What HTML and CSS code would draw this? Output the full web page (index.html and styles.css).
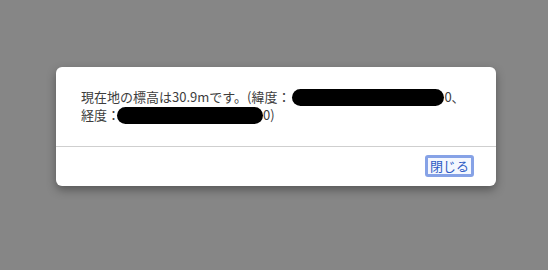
FILE: index.html
```html
<!DOCTYPE html>
<html lang="ja">
<head>
    <meta charset="UTF-8">
    <meta name="viewport" content="width=device-width, initial-scale=1.0">
    <title>標高</title>
    <link rel="stylesheet" href="styles.css">
</head>
<body>
    <div class="overlay">
        <div class="dialog">
            <div class="dialog-body">
                <p class="message">現在地の標高は30.9mです。(緯度：<span class="redact redact-lat"></span>0、<br>経度：<span class="redact redact-lng"></span>0)</p>
            </div>
            <div class="dialog-footer">
                <button class="close-button">閉じる</button>
            </div>
        </div>
    </div>
</body>
</html>
```

FILE: styles.css
```css
* {
    margin: 0;
    padding: 0;
    box-sizing: border-box;
}

body {
    font-family: "Noto Sans CJK JP", "Noto Sans", sans-serif;
    background-color: #868686;
    width: 548px;
    height: 270px;
    overflow: hidden;
}

.overlay {
    display: flex;
    flex-direction: column;
    align-items: flex-start;
    padding: 67px 0 0 56px;
}

.dialog {
    width: 440px;
    background: #ffffff;
    border-radius: 6px;
    box-shadow: 0 4px 10px rgba(0, 0, 0, 0.35);
}

.dialog-body {
    padding: 21px 25px 22px;
    border-bottom: 1px solid #cfcfcf;
}

.message {
    font-size: 13px;
    line-height: 18px;
    color: #3d3d3d;
    white-space: nowrap;
}

.redact {
    display: inline-block;
    height: 17px;
    background: #000000;
    border-radius: 9px;
    vertical-align: -4px;
}

.redact-lat {
    width: 152px;
    margin-left: 2px;
}

.redact-lng {
    width: 146px;
    margin-left: -3px;
}

.dialog-footer {
    display: flex;
    justify-content: flex-end;
    padding: 8px 22px 9px;
}

.close-button {
    font-family: inherit;
    font-size: 13px;
    line-height: 16px;
    color: #2f5bc4;
    background: #f4f7fe;
    border: 3px solid #86a2e6;
    border-radius: 3px;
    padding: 0 2px;
    height: 22px;
    cursor: pointer;
}
```
